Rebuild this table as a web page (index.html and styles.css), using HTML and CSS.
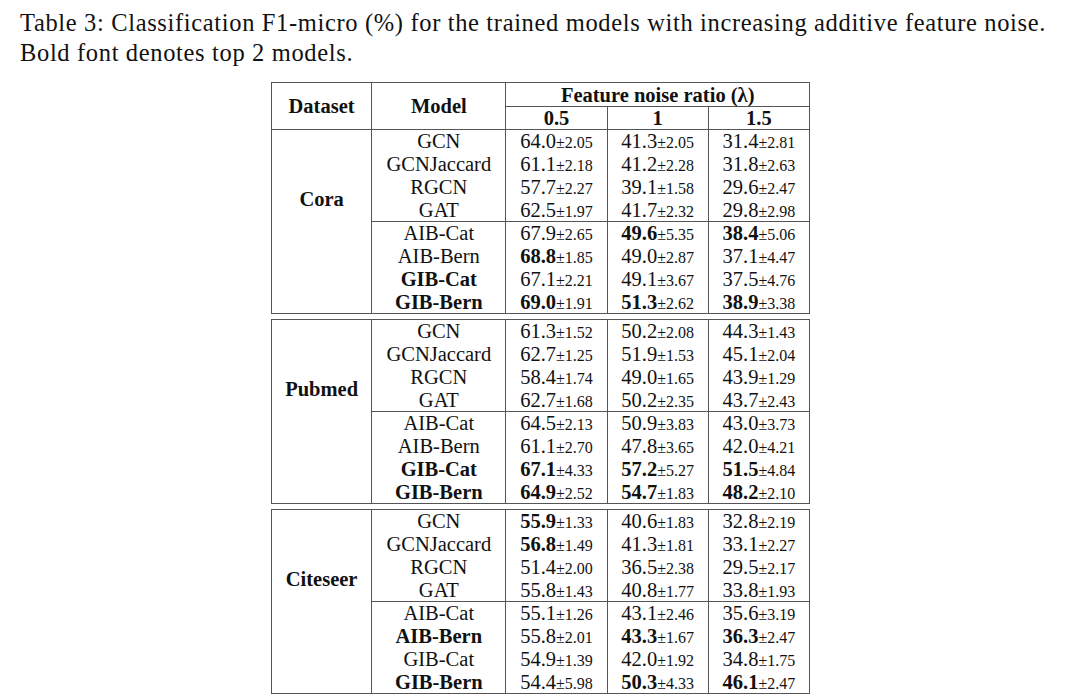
FILE: index.html
```html
<!DOCTYPE html>
<html>
<head>
<meta charset="utf-8">
<link rel="stylesheet" href="styles.css">
</head>
<body>
<p class="caption">Table 3: Classification F1-micro (%) for the trained models with increasing additive feature noise.<br>Bold font denotes top 2 models.</p>
<div class="tables">
<table class="tbl">
<colgroup><col class="c-ds"><col class="c-m"><col class="c-v"><col class="c-v"><col class="c-v"></colgroup>
<thead>
<tr class="h1"><th rowspan="2">Dataset</th><th rowspan="2">Model</th><th colspan="3">Feature noise ratio (λ)</th></tr>
<tr class="h2"><th>0.5</th><th>1</th><th>1.5</th></tr>
</thead>
<tbody>
<tr><td class="ds" rowspan="8"><b>Cora</b></td><td>GCN</td><td>64.0<small>±2.05</small></td><td>41.3<small>±2.05</small></td><td>31.4<small>±2.81</small></td></tr>
<tr><td>GCNJaccard</td><td>61.1<small>±2.18</small></td><td>41.2<small>±2.28</small></td><td>31.8<small>±2.63</small></td></tr>
<tr><td>RGCN</td><td>57.7<small>±2.27</small></td><td>39.1<small>±1.58</small></td><td>29.6<small>±2.47</small></td></tr>
<tr><td>GAT</td><td>62.5<small>±1.97</small></td><td>41.7<small>±2.32</small></td><td>29.8<small>±2.98</small></td></tr>
<tr class="sep"><td>AIB-Cat</td><td>67.9<small>±2.65</small></td><td><b>49.6</b><small>±5.35</small></td><td><b>38.4</b><small>±5.06</small></td></tr>
<tr><td>AIB-Bern</td><td><b>68.8</b><small>±1.85</small></td><td>49.0<small>±2.87</small></td><td>37.1<small>±4.47</small></td></tr>
<tr><td><b>GIB-Cat</b></td><td>67.1<small>±2.21</small></td><td>49.1<small>±3.67</small></td><td>37.5<small>±4.76</small></td></tr>
<tr><td><b>GIB-Bern</b></td><td><b>69.0</b><small>±1.91</small></td><td><b>51.3</b><small>±2.62</small></td><td><b>38.9</b><small>±3.38</small></td></tr>
</tbody>
</table>
<table class="tbl">
<colgroup><col class="c-ds"><col class="c-m"><col class="c-v"><col class="c-v"><col class="c-v"></colgroup>
<tbody>
<tr><td class="ds" rowspan="8"><b>Pubmed</b></td><td>GCN</td><td>61.3<small>±1.52</small></td><td>50.2<small>±2.08</small></td><td>44.3<small>±1.43</small></td></tr>
<tr><td>GCNJaccard</td><td>62.7<small>±1.25</small></td><td>51.9<small>±1.53</small></td><td>45.1<small>±2.04</small></td></tr>
<tr><td>RGCN</td><td>58.4<small>±1.74</small></td><td>49.0<small>±1.65</small></td><td>43.9<small>±1.29</small></td></tr>
<tr><td>GAT</td><td>62.7<small>±1.68</small></td><td>50.2<small>±2.35</small></td><td>43.7<small>±2.43</small></td></tr>
<tr class="sep"><td>AIB-Cat</td><td>64.5<small>±2.13</small></td><td>50.9<small>±3.83</small></td><td>43.0<small>±3.73</small></td></tr>
<tr><td>AIB-Bern</td><td>61.1<small>±2.70</small></td><td>47.8<small>±3.65</small></td><td>42.0<small>±4.21</small></td></tr>
<tr><td><b>GIB-Cat</b></td><td><b>67.1</b><small>±4.33</small></td><td><b>57.2</b><small>±5.27</small></td><td><b>51.5</b><small>±4.84</small></td></tr>
<tr><td><b>GIB-Bern</b></td><td><b>64.9</b><small>±2.52</small></td><td><b>54.7</b><small>±1.83</small></td><td><b>48.2</b><small>±2.10</small></td></tr>
</tbody>
</table>
<table class="tbl">
<colgroup><col class="c-ds"><col class="c-m"><col class="c-v"><col class="c-v"><col class="c-v"></colgroup>
<tbody>
<tr><td class="ds" rowspan="8"><b>Citeseer</b></td><td>GCN</td><td><b>55.9</b><small>±1.33</small></td><td>40.6<small>±1.83</small></td><td>32.8<small>±2.19</small></td></tr>
<tr><td>GCNJaccard</td><td><b>56.8</b><small>±1.49</small></td><td>41.3<small>±1.81</small></td><td>33.1<small>±2.27</small></td></tr>
<tr><td>RGCN</td><td>51.4<small>±2.00</small></td><td>36.5<small>±2.38</small></td><td>29.5<small>±2.17</small></td></tr>
<tr><td>GAT</td><td>55.8<small>±1.43</small></td><td>40.8<small>±1.77</small></td><td>33.8<small>±1.93</small></td></tr>
<tr class="sep"><td>AIB-Cat</td><td>55.1<small>±1.26</small></td><td>43.1<small>±2.46</small></td><td>35.6<small>±3.19</small></td></tr>
<tr><td><b>AIB-Bern</b></td><td>55.8<small>±2.01</small></td><td><b>43.3</b><small>±1.67</small></td><td><b>36.3</b><small>±2.47</small></td></tr>
<tr><td>GIB-Cat</td><td>54.9<small>±1.39</small></td><td>42.0<small>±1.92</small></td><td>34.8<small>±1.75</small></td></tr>
<tr><td><b>GIB-Bern</b></td><td>54.4<small>±5.98</small></td><td><b>50.3</b><small>±4.33</small></td><td><b>46.1</b><small>±2.47</small></td></tr>
</tbody>
</table>
</div>
</body>
</html>
```
FILE: styles.css
```css
html, body {
  margin: 0;
  padding: 0;
  background: #fff;
}
body {
  font-family: "Liberation Serif", "Times New Roman", serif;
  color: #111;
}
.caption {
  margin: 0;
  padding: 8px 0 0 20px;
  font-size: 24.5px;
  letter-spacing: 0.65px;
  line-height: 30px;
}
.tables {
  display: flex;
  flex-direction: column;
  align-items: flex-start;
  gap: 5px;
  padding: 14px 0 0 271px;
}
.tbl {
  border-collapse: collapse;
  table-layout: fixed;
  width: 539px;
  font-size: 20.5px;
}
.c-ds { width: 100px; }
.c-m { width: 134px; }
.c-v { width: 101px; }
.tbl tr { height: 23px; }
.tbl th, .tbl td {
  border-left: 1px solid #555;
  border-right: 1px solid #555;
  padding: 0;
  text-align: center;
  line-height: 22px;
  height: 22px;
  white-space: nowrap;
}
.tbl th {
  font-weight: bold;
  border-top: 1px solid #555;
  border-bottom: 1px solid #555;
}
.h1 th { height: 23px; }
.h2 th { height: 21px; }
.tbl tbody tr:last-child td { border-bottom: 1px solid #555; }
.tbl tbody tr:first-child td { border-top: 1px solid #555; }
.tbl td.ds {
  vertical-align: middle;
  padding-bottom: 46px;
  border-bottom: 1px solid #555;
}
.tbl tr.sep td { border-top: 1px solid #555; }
.tbl small {
  font-size: 16px;
  line-height: 1;
}
```
